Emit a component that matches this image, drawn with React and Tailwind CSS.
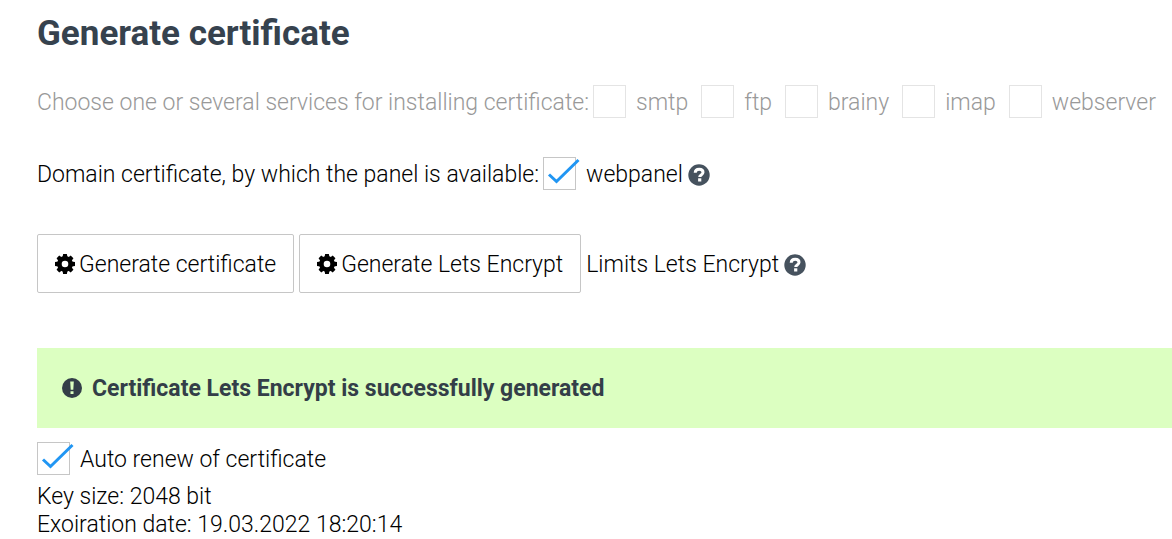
import clsx from 'clsx';

const services = ['smtp', 'ftp', 'brainy', 'imap', 'webserver'];

const cogTeeth = [0, 45, 90, 135, 180, 225, 270, 315];

function CogIcon() {
  return (
    <svg viewBox="0 0 20 20" className="size-5 shrink-0" aria-hidden="true">
      <circle cx="10" cy="10" r="5.6" fill="none" stroke="currentColor" strokeWidth="4.6" />
      {cogTeeth.map((angle) => (
        <path key={angle} d="M7.500 3.500 8.100 0h3.800l.6 3.500z" fill="currentColor" transform={`rotate(${angle} 10 10)`} />
      ))}
    </svg>
  );
}

function QuestionIcon() {
  return (
    <svg viewBox="0 0 22 22" className="size-[22px]" aria-hidden="true">
      <circle cx="11" cy="11" r="10.7" fill="#46525e" />
      <path
        d="M7.2 8.7C7.3 6.3 8.9 5.2 11.2 5.2c2.2 0 3.8 1.1 3.8 3.1 0 2.7-3.3 2.5-3.3 4.7"
        fill="none"
        stroke="#fff"
        strokeWidth="3"
      />
      <path d="M10.1 14.300h3.200v3.200h-3.200z" fill="#fff" />
    </svg>
  );
}

function ExclamationIcon() {
  return (
    <svg viewBox="0 0 20 20" className="size-5 shrink-0" aria-hidden="true">
      <circle cx="10" cy="10" r="10" fill="currentColor" />
      <path d="M8.2 3.5h3.6l-.5 8.200H8.700zM8.500 13.300h3v2.800h-3z" fill="#dcffc1" />
    </svg>
  );
}

function HelpButton({ label }) {
  return (
    <button type="button" aria-label={label} className="ml-[5px] block pt-0.5">
      <QuestionIcon />
    </button>
  );
}

function Checkbox({ label, disabled = false, defaultChecked = false }) {
  return (
    <label className="flex items-center gap-2.5">
      <span className="relative block size-[33px] shrink-0">
        <input
          type="checkbox"
          disabled={disabled}
          defaultChecked={defaultChecked}
          className={clsx(
            'peer block size-full appearance-none border bg-white',
            disabled ? 'border-[#e4e4e4]' : 'border-[#c6c6c6]',
          )}
        />
        <svg
          viewBox="0 0 38 34"
          className="pointer-events-none absolute top-0 left-0 hidden h-[34px] w-[38px] peer-checked:block"
          aria-hidden="true"
        >
          <path d="M6 17.500 13.500 24.500 35.500 3" fill="none" stroke="#2196f3" strokeWidth="3" />
        </svg>
      </span>
      <span className="pt-[3px]">{label}</span>
    </label>
  );
}

function ActionButton({ children }) {
  return (
    <button
      type="button"
      className="flex h-[59px] items-center gap-1 rounded-xs border border-[#c6c6c6] bg-white px-[17px]"
    >
      <CogIcon />
      <span className="pt-0.5">{children}</span>
    </button>
  );
}

export default function App() {
  return (
    <main className="bg-white pl-[37px] font-['Roboto',sans-serif] text-[23px] leading-7 font-light whitespace-nowrap text-black">
      <h1 className="pt-3.5 text-[35px] leading-10 font-bold text-[#36424e]">Generate certificate</h1>

      <fieldset
        disabled
        aria-labelledby="services-label"
        className="mt-[31px] flex items-center text-[#999]"
      >
        <span id="services-label" className="mr-1 pt-[3px]">
          Choose one or several services for installing certificate:
        </span>
        <div className="flex gap-[13px]">
          {services.map((service) => (
            <Checkbox key={service} label={service} disabled />
          ))}
        </div>
      </fieldset>

      <div className="mt-[39px] flex items-center">
        <span className="mr-1 pt-[3px]">Domain certificate, by which the panel is available:</span>
        <Checkbox label="webpanel" defaultChecked />
        <HelpButton label="About the panel certificate" />
      </div>

      <div className="mt-11 flex items-center">
        <div className="mr-[5px] flex gap-[5px]">
          <ActionButton>Generate certificate</ActionButton>
          <ActionButton>Generate Lets Encrypt</ActionButton>
        </div>
        <span className="pt-0.5">Limits Lets Encrypt</span>
        <HelpButton label="About Lets Encrypt limits" />
      </div>

      <div
        role="status"
        className="mt-[55px] flex h-20 items-center gap-2.5 bg-[#dcffc1] px-[25px] font-bold text-[#333e48]"
      >
        <ExclamationIcon />
        <span className="pt-0.5">Certificate Lets Encrypt is successfully generated</span>
      </div>

      <div className="mt-3.5 flex">
        <Checkbox label="Auto renew of certificate" defaultChecked />
      </div>
      <p className="mt-2">Key size: 2048 bit</p>
      <p>Exoiration date: 19.03.2022 18:20:14</p>
    </main>
  );
}
